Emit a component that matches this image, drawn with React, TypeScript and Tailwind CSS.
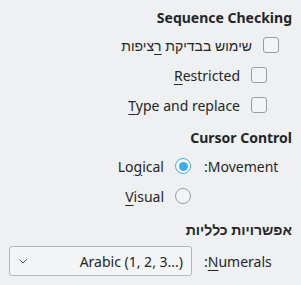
import React from 'react'

function Checkbox() {
  return <span className="block w-4 h-4 shrink-0 rounded-[3px] border border-[#9a9c9e] bg-[#f3f4f5]" />
}

function Radio({ checked }: { checked?: boolean }) {
  if (checked) {
    return (
      <span className="flex w-4 h-4 shrink-0 items-center justify-center rounded-full border border-[#3daee9] bg-[#fcfcfc]">
        <span className="block w-[9px] h-[9px] rounded-full bg-[#3daee9]" />
      </span>
    )
  }
  return <span className="block w-4 h-4 shrink-0 rounded-full border border-[#9a9c9e] bg-[#f3f4f5]" />
}

function U({ children }: { children: React.ReactNode }) {
  return <span className="underline underline-offset-[3px] decoration-1">{children}</span>
}

export default function App() {
  return (
    <div
      className="w-[301px] h-[285px] bg-[#eff0f1] text-[#232629] text-[14px] overflow-hidden"
      style={{ fontFamily: '"Noto Sans", "Liberation Sans", sans-serif' }}
    >
      <div className="flex flex-col items-end pr-[9px] pt-[8px]">
        {/* Sequence Checking */}
        <div className="h-[20px] leading-[20px] font-bold">Sequence Checking</div>
        <div className="mt-[2px] flex flex-col items-end pr-[13px]">
          <div className="h-[30px] flex items-center gap-[11px]">
            <span dir="rtl">
              שימוש בבדיקת <U>ר</U>ציפות
            </span>
            <Checkbox />
          </div>
          <div className="flex flex-col items-end pr-[12px]">
            <div className="h-[30px] flex items-center gap-[11px]">
              <span>
                <U>R</U>estricted
              </span>
              <Checkbox />
            </div>
            <div className="h-[30px] flex items-center gap-[11px]">
              <span>
                <U>T</U>ype and replace
              </span>
              <Checkbox />
            </div>
          </div>
        </div>

        {/* Cursor Control */}
        <div className="mt-[8px] h-[20px] leading-[20px] font-bold">Cursor Control</div>
        <div className="mt-[3px] flex items-start pr-[11px] w-full justify-end">
          <div className="flex flex-col items-end">
            <div className="h-[30px] flex items-center gap-[11px]">
              <span>
                Lo<U>g</U>ical
              </span>
              <Radio checked />
            </div>
            <div className="h-[30px] flex items-center gap-[11px]">
              <span>
                <U>V</U>isual
              </span>
              <Radio />
            </div>
          </div>
          <div className="w-[77px] ml-[13px] h-[30px] flex items-center">:Movement</div>
        </div>

        {/* General options */}
        <div className="mt-[9px] h-[20px] leading-[20px] font-bold" dir="rtl">
          אפשרויות כלליות
        </div>
        <div className="mt-[6px] w-full flex items-center justify-end pr-[11px]">
          <div className="w-[183px] h-[30px] flex items-center justify-between rounded-[3px] border border-[#b4b6b8] bg-[#f4f5f6] pl-[9px] pr-[8px]">
            <svg width="8" height="5" viewBox="0 0 8 5" className="text-[#4d4f52]">
              <path d="M0.5 0.5 L4 4 L7.5 0.5" fill="none" stroke="currentColor" strokeWidth="1" />
            </svg>
            <span>Arabic (1, 2, 3...)</span>
          </div>
          <div className="w-[77px] ml-[12px] h-[30px] flex items-center">
            <span>
              :<U>N</U>umerals
            </span>
          </div>
        </div>
      </div>
    </div>
  )
}
